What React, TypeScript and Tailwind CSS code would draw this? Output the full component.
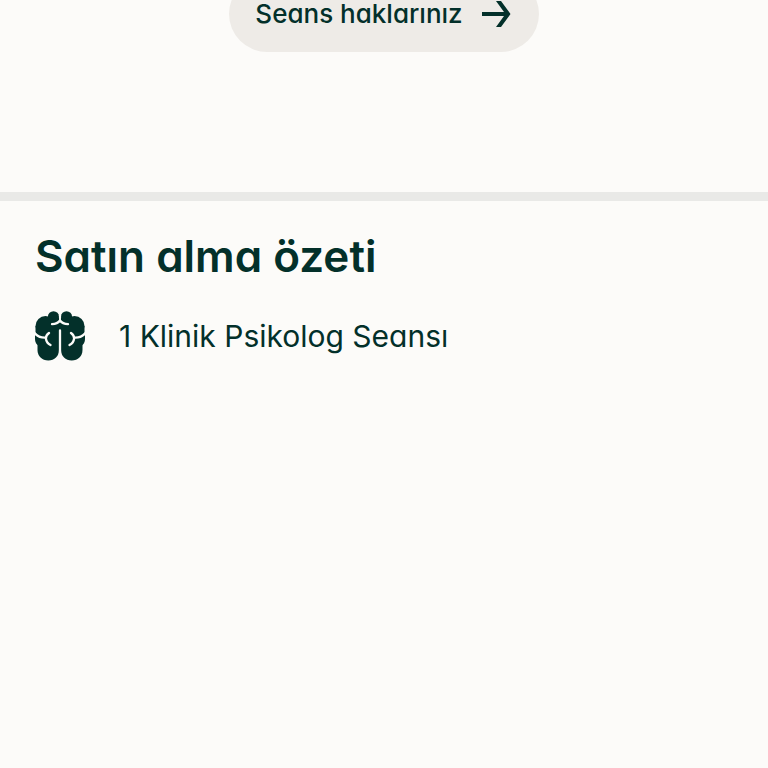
function BrainIcon() {
  return (
    <svg viewBox="0 0 50 50" className="size-[50px] shrink-0" aria-hidden="true">
      <g fill="#03302a">
        <path d="M14 7H36V26H14Z" />
        <circle cx="18.500" cy="5.800" r="5.600" />
        <circle cx="31.500" cy="5.800" r="5.600" />
        <circle cx="10.500" cy="15" r="10" />
        <circle cx="39.500" cy="15" r="10" />
        <path d="M0.500 15V21Q1 24 4 26H46Q49 24 49.500 21V15Z" />
        <path d="M0 24H10V35H4Q0 33 0 28Z" />
        <path d="M50 24H40V35H46Q50 33 50 28Z" />
        <path d="M2.500 24H24V39C24 45 19.500 49.500 13.300 49.500C7 49.500 2.500 45 2.500 39Z" />
        <path d="M47.500 24H26V39C26 45 30.500 49.500 36.700 49.500C43 49.500 47.500 45 47.500 39Z" />
      </g>
      <path d="M23.800 4H26.200L25.800 10H24.200Z" fill="#fcfbf9" />
      <g fill="none" stroke="#fcfbf9" strokeWidth="2.300" strokeLinecap="round">
        <path d="M17 13.200Q22.500 13 25 9.500Q27.500 13 33 13.200M25 19.500V50" />
        <path d="M0 22.500Q4 27 11 26.500M14 22Q10.500 24.500 11 28Q11.500 32 15.500 34" />
        <path d="M50 22.500Q46 27 39 26.500M36 22Q39.500 24.500 39 28Q38.500 32 34.500 34" />
      </g>
    </svg>
  );
}

function ArrowIcon() {
  return (
    <svg viewBox="0 0 32 28" className="h-7 w-8" aria-hidden="true">
      <path d="M1 12H23L15 1H20L29.500 14L20 27H15L23 16H1Z" fill="#03302a" />
    </svg>
  );
}

export default function App() {
  return (
    <main className="min-h-screen overflow-hidden bg-[#fcfbf9] font-['Inter','Liberation_Sans',sans-serif] text-[#03302a] [font-feature-settings:'cv11']">
      <div className="-mt-6 flex justify-center pb-[140px]">
        <button type="button" className="flex h-[76px] items-center gap-[18px] rounded-full bg-[#eeebe7] px-[26px] text-[26px] leading-[26px] font-medium">
          <span>Seans haklarınız</span>
          <ArrowIcon />
        </button>
      </div>
      <section className="border-t-[9px] border-[#e9e9e7] px-[35px] pt-7">
        <h1 className="text-[44px] leading-[54px] font-semibold">Satın alma özeti</h1>
        <ul className="mt-7">
          <li className="flex items-center gap-[34px] text-[30px] leading-9">
            <BrainIcon />
            <span>1 Klinik Psikolog Seansı</span>
          </li>
        </ul>
      </section>
    </main>
  );
}
